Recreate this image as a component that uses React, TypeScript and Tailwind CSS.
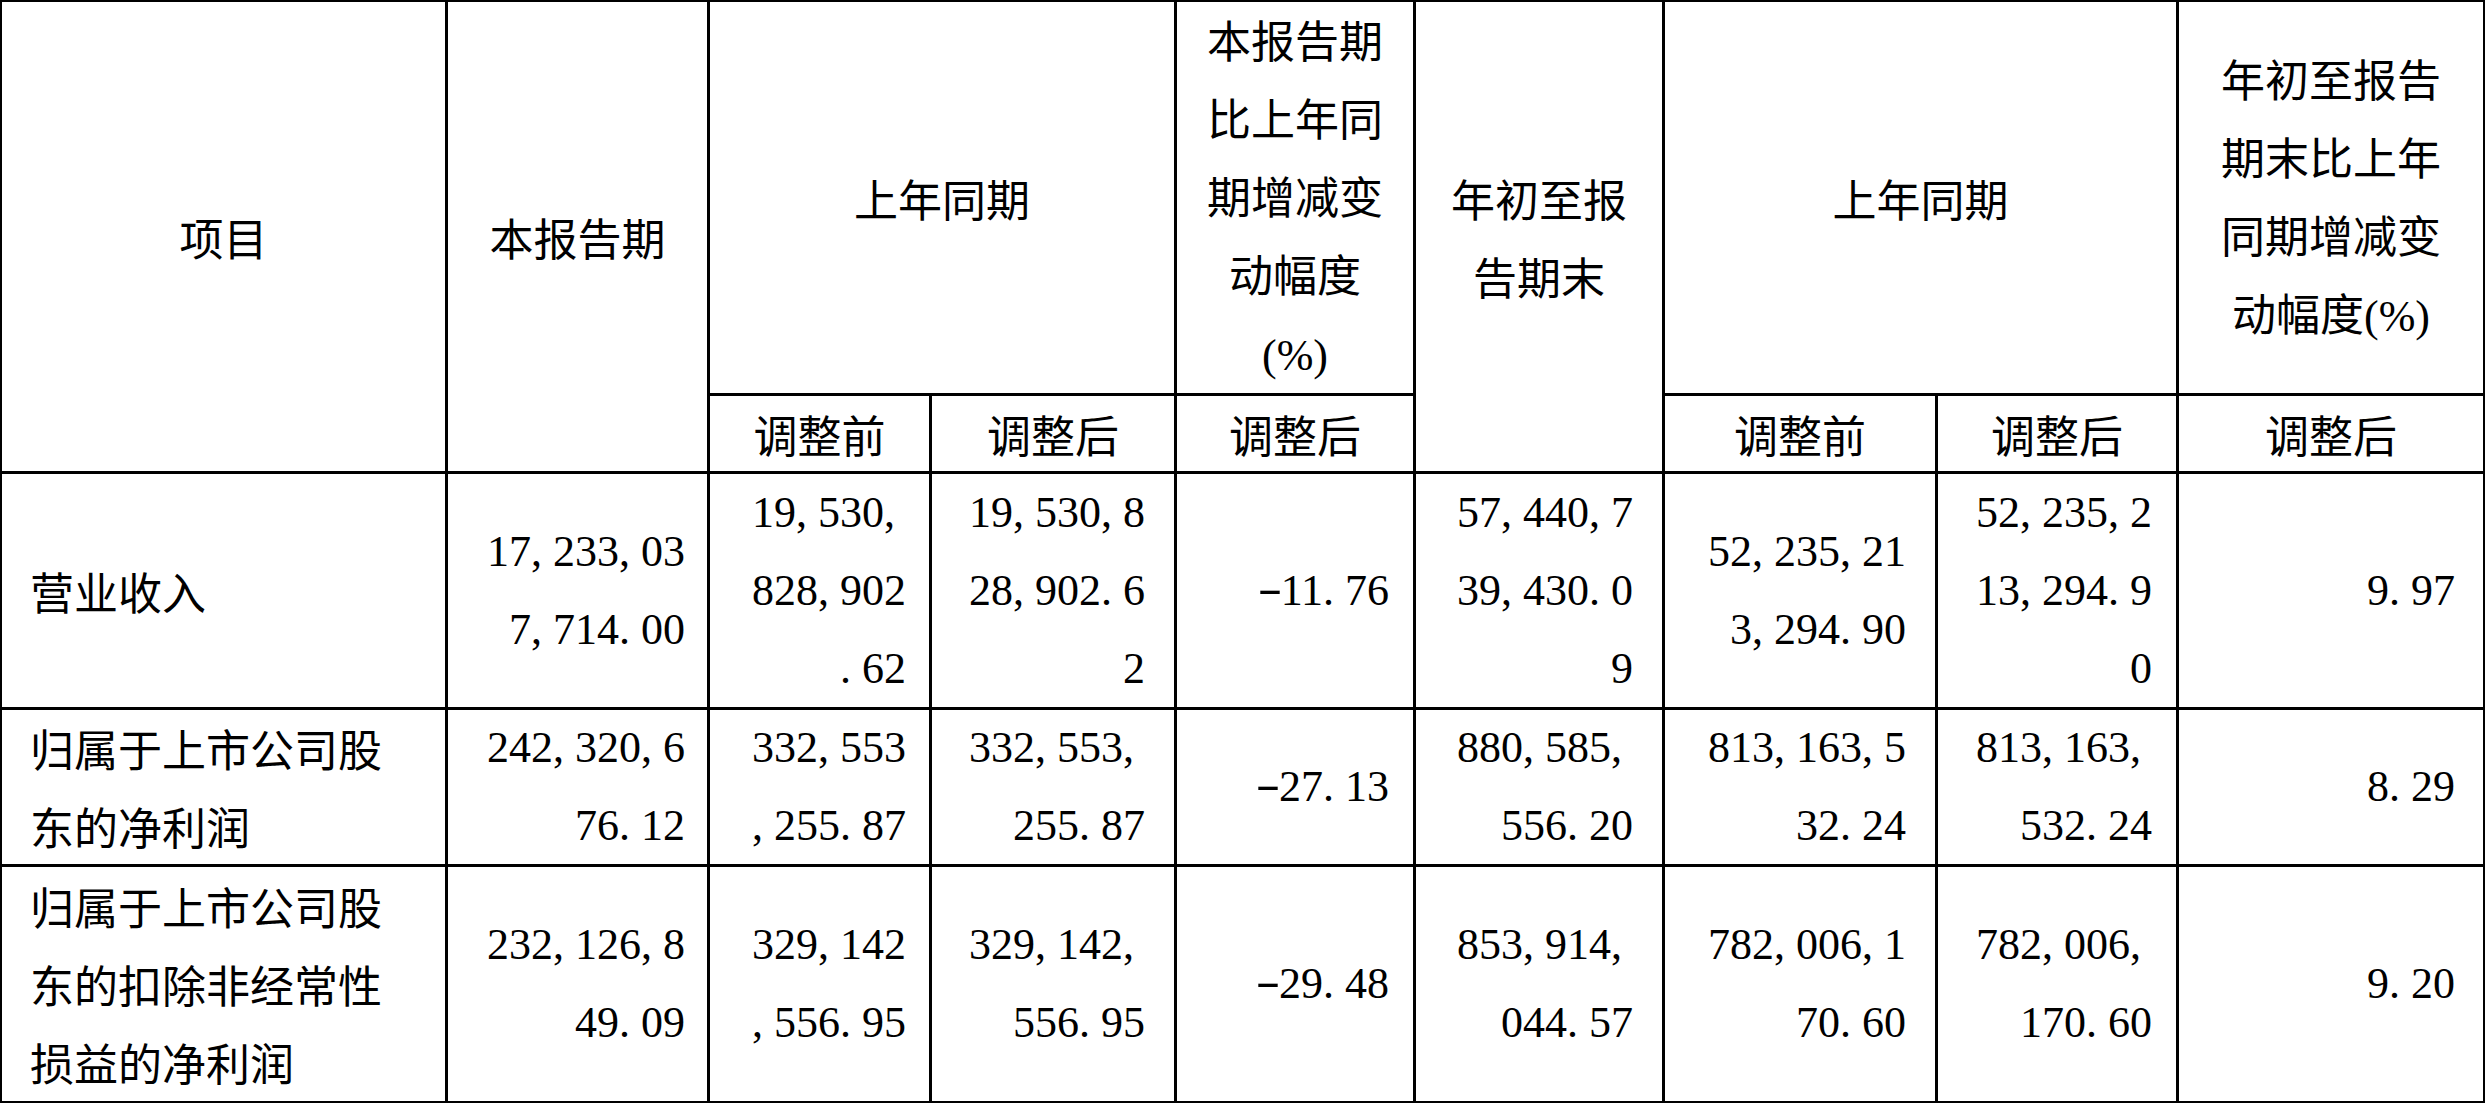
import React from "react";

const CJK = "font-['Noto_Sans_CJK_SC',sans-serif]";
const NUM = "font-['Liberation_Serif','Noto_Sans_CJK_SC',serif]";

function NumLine({ s }: { s: string }) {
  const parts: React.ReactNode[] = [];
  let buf = "";
  let k = 0;
  const flush = () => {
    if (buf) {
      parts.push(<span key={k++}>{buf}</span>);
      buf = "";
    }
  };
  for (const c of s) {
    if (c === "," || c === ".") {
      flush();
      parts.push(
        <span key={k++} className="tracking-[11px]">
          {c}
        </span>
      );
    } else if (c === "-") {
      flush();
      parts.push(
        <span
          key={k++}
          className="inline-block w-[22px] text-center scale-x-[1.7] -translate-y-[2px]"
        >
          {c}
        </span>
      );
    } else {
      buf += c;
    }
  }
  flush();
  return <div className="whitespace-pre">{parts}</div>;
}

function Head({
  lines,
  className = "",
}: {
  lines: React.ReactNode[];
  className?: string;
}) {
  return (
    <div
      className={`bg-white flex flex-col items-center justify-center text-center ${className}`}
    >
      {lines.map((l, i) => (
        <div key={i} className="whitespace-nowrap">
          {l}
        </div>
      ))}
    </div>
  );
}

function Label({ lines }: { lines: string[] }) {
  return (
    <div className="bg-white flex flex-col items-start justify-center pl-[28px]">
      {lines.map((l, i) => (
        <div key={i} className="whitespace-nowrap">
          {l}
        </div>
      ))}
    </div>
  );
}

function Num({ lines, pad }: { lines: string[]; pad: string }) {
  return (
    <div className={`bg-white flex flex-col items-end justify-center ${NUM} ${pad}`}>
      {lines.map((l, i) => (
        <NumLine key={i} s={l} />
      ))}
    </div>
  );
}

const PADS = [
  "pr-[22px]",
  "pr-[23px]",
  "pr-[29px]",
  "pr-[24px]",
  "pr-[29px]",
  "pr-[29px]",
  "pr-[24px]",
  "pr-[28px]",
];

const pct = <span className={NUM}>(%)</span>;

const rows: { label: string[]; nums: string[][] }[] = [
  {
    label: ["营业收入"],
    nums: [
      ["17,233,03", "7,714.00"],
      ["19,530,", "828,902", ".62"],
      ["19,530,8", "28,902.6", "2"],
      ["-11.76"],
      ["57,440,7", "39,430.0", "9"],
      ["52,235,21", "3,294.90"],
      ["52,235,2", "13,294.9", "0"],
      ["9.97"],
    ],
  },
  {
    label: ["归属于上市公司股", "东的净利润"],
    nums: [
      ["242,320,6", "76.12"],
      ["332,553", ",255.87"],
      ["332,553,", "255.87"],
      ["-27.13"],
      ["880,585,", "556.20"],
      ["813,163,5", "32.24"],
      ["813,163,", "532.24"],
      ["8.29"],
    ],
  },
  {
    label: ["归属于上市公司股", "东的扣除非经常性", "损益的净利润"],
    nums: [
      ["232,126,8", "49.09"],
      ["329,142", ",556.95"],
      ["329,142,", "556.95"],
      ["-29.48"],
      ["853,914,", "044.57"],
      ["782,006,1", "70.60"],
      ["782,006,", "170.60"],
      ["9.20"],
    ],
  },
];

export default function App() {
  return (
    <div className="bg-white min-h-screen">
      <div
        className={`grid w-fit grid-cols-[443px_259px_219px_242px_236px_246px_270px_238px_304px] grid-rows-[391px_75px_233px_154px_234px] gap-[3px] bg-black p-[2px] text-[44px] leading-[78px] text-black ${CJK}`}
      >
        <Head className="col-start-1 row-start-1 row-span-2" lines={["项目"]} />
        <Head className="col-start-2 row-start-1 row-span-2" lines={["本报告期"]} />
        <Head className="col-start-3 row-start-1 col-span-2" lines={["上年同期"]} />
        <Head
          className="col-start-5 row-start-1"
          lines={["本报告期", "比上年同", "期增减变", "动幅度", pct]}
        />
        <Head
          className="col-start-6 row-start-1 row-span-2"
          lines={["年初至报", "告期末"]}
        />
        <Head className="col-start-7 row-start-1 col-span-2" lines={["上年同期"]} />
        <Head
          className="col-start-9 row-start-1"
          lines={[
            "年初至报告",
            "期末比上年",
            "同期增减变",
            <>
              动幅度{pct}
            </>,
          ]}
        />
        <Head className="col-start-3 row-start-2" lines={["调整前"]} />
        <Head className="col-start-4 row-start-2" lines={["调整后"]} />
        <Head className="col-start-5 row-start-2" lines={["调整后"]} />
        <Head className="col-start-7 row-start-2" lines={["调整前"]} />
        <Head className="col-start-8 row-start-2" lines={["调整后"]} />
        <Head className="col-start-9 row-start-2" lines={["调整后"]} />
        {rows.map((r, ri) => (
          <React.Fragment key={ri}>
            <Label lines={r.label} />
            {r.nums.map((n, ci) => (
              <Num key={ci} lines={n} pad={PADS[ci]} />
            ))}
          </React.Fragment>
        ))}
      </div>
    </div>
  );
}
